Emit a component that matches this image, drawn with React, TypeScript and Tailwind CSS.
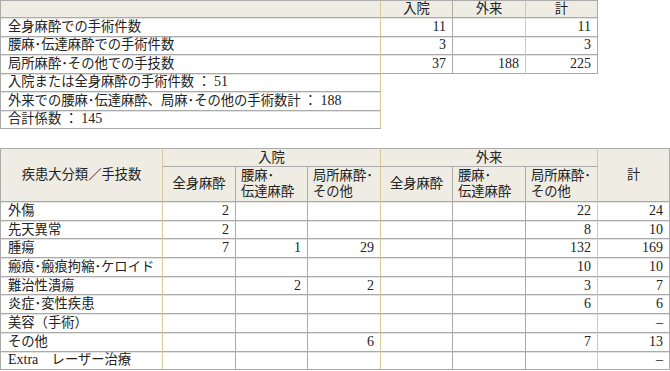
import React from "react";

const G = "border-[#aaaaaa]";
const base = "text-[13.3px] leading-[16px] text-[#222] p-0 align-middle";
const hdr = "bg-[#efece3]";
const line = "shadow-[inset_0_1px_0_#e4e4e4]";
const numR = "text-right pr-[6px] text-[14px]";

type Cell = string | number | null;

const topRows: [string, Cell, Cell, Cell][] = [
  ["全身麻酔での手術件数", 11, null, 11],
  ["腰麻･伝達麻酔での手術件数", 3, null, 3],
  ["局所麻酔･その他での手技数", 37, 188, 225],
];

const notes: [string, string][] = [
  ["入院または全身麻酔の手術件数 ： ", "51"],
  ["外来での腰麻･伝達麻酔、局麻･その他の手術数計 ： ", "188"],
  ["合計係数 ： ", "145"],
];

const rows: [React.ReactNode, Cell, Cell, Cell, Cell, Cell, Cell, Cell][] = [
  ["外傷", 2, null, null, null, null, 22, 24],
  ["先天異常", 2, null, null, null, null, 8, 10],
  ["腫瘍", 7, 1, 29, null, null, 132, 169],
  ["瘢痕･瘢痕拘縮･ケロイド", null, null, null, null, null, 10, 10],
  ["難治性潰瘍", null, 2, 2, null, null, 3, 7],
  ["炎症･変性疾患", null, null, null, null, null, 6, 6],
  ["美容（手術）", null, null, null, null, null, null, "–"],
  ["その他", null, null, 6, null, null, 7, 13],
  [
    <>
      <span className="text-[14px]">Extra</span>　レーザー治療
    </>,
    null, null, null, null, null, null, "–",
  ],
];

const bottomR = [
  "border-r-[#d6c99c]",
  "border-r-[#aaaaaa]",
  "border-r-[#aaaaaa]",
  "border-r-[#d6c99c]",
  "border-r-[#aaaaaa]",
  "border-r-[#aaaaaa]",
  "border-r-[#d6c99c]",
  "border-r-[#aaaaaa]",
];

export default function App() {
  return (
    <div className="w-[670px] h-[371px] overflow-hidden bg-white font-['Liberation_Serif','Noto_Sans_CJK_JP',serif]">
      <table className="border-separate border-spacing-0 table-fixed w-[598px]">
        <colgroup>
          <col className="w-[381px]" />
          <col className="w-[72px]" />
          <col className="w-[73px]" />
          <col className="w-[72px]" />
        </colgroup>
        <tbody>
          <tr className="h-[18px]">
            <td className={`${base} ${hdr} border-l border-t border-b border-r ${G} border-r-[#d6c99c]`}></td>
            <td className={`${base} ${hdr} border-t border-b border-r ${G} text-center`}>入院</td>
            <td className={`${base} ${hdr} border-t border-b border-r ${G} border-r-[#d6c99c] text-center`}>外来</td>
            <td className={`${base} ${hdr} border-t border-b border-r ${G} text-center`}>計</td>
          </tr>
          {topRows.map((r) => (
            <tr key={r[0]} className="h-[18.5px]">
              <td className={`${base} ${line} border-l border-b border-r ${G} border-r-[#d6c99c] pl-[7px]`}>{r[0]}</td>
              <td className={`${base} ${line} border-b border-r ${G} ${numR}`}>{r[1]}</td>
              <td className={`${base} ${line} border-b border-r ${G} border-r-[#d6c99c] ${numR}`}>{r[2]}</td>
              <td className={`${base} ${line} border-b border-r ${G} ${numR}`}>{r[3]}</td>
            </tr>
          ))}
          {notes.map((n) => (
            <tr key={n[0]} className="h-[18.5px]">
              <td className={`${base} ${line} border-l border-b border-r ${G} border-r-[#d6c99c] pl-[7px] whitespace-pre`}>
                {n[0]}
                <span className="text-[14px]">{n[1]}</span>
              </td>
            </tr>
          ))}
        </tbody>
      </table>

      <table className="mt-[19px] border-separate border-spacing-0 table-fixed w-[670px]">
        <colgroup>
          <col className="w-[163px]" />
          <col className="w-[73px]" />
          <col className="w-[72px]" />
          <col className="w-[73px]" />
          <col className="w-[72px]" />
          <col className="w-[73px]" />
          <col className="w-[72px]" />
          <col className="w-[72px]" />
        </colgroup>
        <thead>
          <tr className="h-[19px]">
            <th rowSpan={2} className={`${base} ${hdr} font-normal border-l border-t border-b border-r ${G} ${bottomR[0]} text-center`}>
              疾患大分類／手技数
            </th>
            <th colSpan={3} className={`${base} ${hdr} font-normal border-t border-b border-r ${G} ${bottomR[3]} text-center`}>
              入院
            </th>
            <th colSpan={3} className={`${base} ${hdr} font-normal border-t border-b border-r ${G} ${bottomR[6]} text-center`}>
              外来
            </th>
            <th rowSpan={2} className={`${base} ${hdr} font-normal border-t border-b border-r ${G} text-center`}>
              計
            </th>
          </tr>
          <tr className="h-[35px]">
            {[0, 1].map((g) => (
              <React.Fragment key={g}>
                <th className={`${base} ${hdr} font-normal border-b border-r ${G} ${bottomR[1 + g * 3]} text-center`}>全身麻酔</th>
                <th className={`${base} ${hdr} font-normal border-b border-r ${G} ${bottomR[2 + g * 3]} text-left pl-[5px]`}>
                  腰麻･<br />伝達麻酔
                </th>
                <th className={`${base} ${hdr} font-normal border-b border-r ${G} ${bottomR[3 + g * 3]} text-left pl-[5px]`}>
                  局所麻酔･<br />その他
                </th>
              </React.Fragment>
            ))}
          </tr>
        </thead>
        <tbody>
          {rows.map((r, ri) => (
            <tr key={ri} className="h-[18.7px]">
              {r.map((c, i) => (
                <td
                  key={i}
                  className={`${base} ${line} border-b border-r ${G} ${bottomR[i]} ${
                    i === 0 ? "border-l pl-[7px] whitespace-nowrap" : numR
                  }`}
                >
                  {c}
                </td>
              ))}
            </tr>
          ))}
        </tbody>
      </table>
    </div>
  );
}
